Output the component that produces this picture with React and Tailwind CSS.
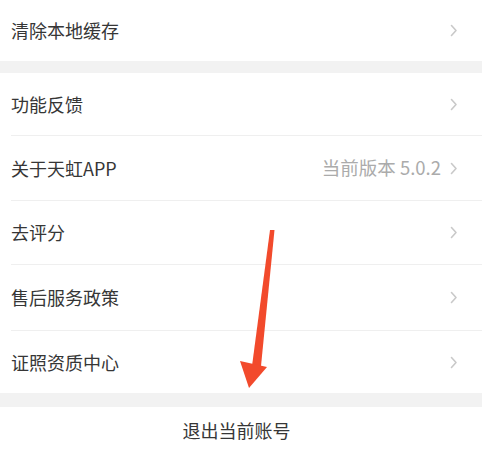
import React from "react";

const Chevron = () => (
  <svg width="8" height="13" viewBox="0 0 8 13" className="shrink-0">
    <path d="M1.5 1.5 L6 6.5 L1.5 11.5" fill="none" stroke="#c9c9c9" strokeWidth="1.6" strokeLinecap="round" strokeLinejoin="round" />
  </svg>
);

const Row = ({ label, extra, height = "h-16", last }) => (
  <div className={`${height} flex items-center pr-[24px] ${last ? "" : "border-b border-[#efefef]"}`}>
    <span className="flex-1 text-[18px] text-[#363636]">{label}</span>
    {extra && <span className="text-[18.5px] text-[#ababab] mr-[9px]">{extra}</span>}
    <Chevron />
  </div>
);

export default function App() {
  return (
    <div
      className="relative w-[482px] h-[454px] overflow-hidden bg-white"
      style={{ fontFamily: '"Noto Sans CJK SC", "Noto Sans", sans-serif' }}
    >
      <div className="pl-[11px] bg-white">
        <Row label="清除本地缓存" height="h-[61px]" last />
      </div>
      <div className="h-[12px] bg-[#f2f2f2]" />
      <div className="pl-[11px] bg-white">
        <Row label="功能反馈" height="h-[63px]" />
        <Row label="关于天虹APP" extra="当前版本 5.0.2" height="h-[65px]" />
        <Row label="去评分" height="h-[64px]" />
        <Row label="售后服务政策" height="h-[66px]" />
        <Row label="证照资质中心" height="h-[62px]" last />
      </div>
      <div className="h-[14px] bg-[#f2f2f2]" />
      <div className="h-[47px] flex items-center justify-center pr-[9px] text-[18px] text-[#363636]">
        退出当前账号
      </div>

      <svg className="absolute left-0 top-0 pointer-events-none" width="482" height="454" viewBox="0 0 482 454">
        <polygon points="270,230 274.5,230 261,366 252,366" fill="#f24a2c" />
        <polygon points="240,361 267,367 249,388" fill="#f24a2c" />
      </svg>
    </div>
  );
}
